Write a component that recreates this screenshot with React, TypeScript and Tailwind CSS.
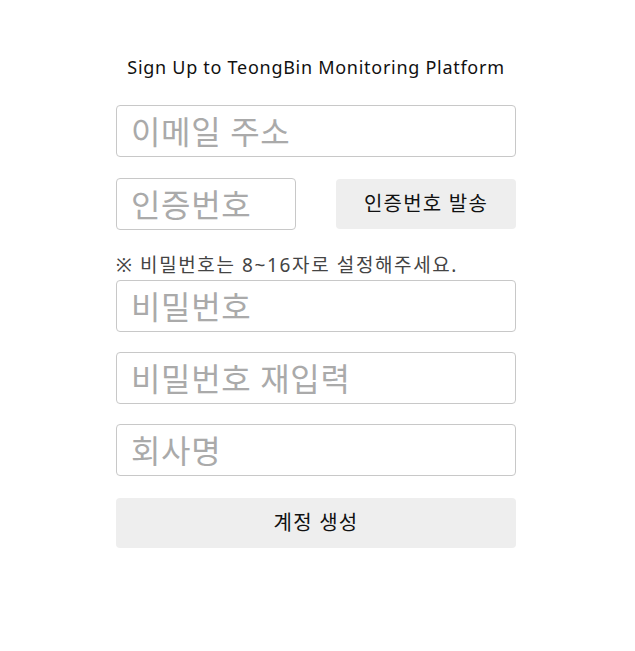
import React from 'react';

const font = { fontFamily: '"Noto Sans", "Noto Sans CJK KR", sans-serif' };

const inputClass =
  'h-[52px] rounded-[4px] border border-[#c8c8c8] bg-white px-[14px] text-[32px] tracking-[0.02em] text-[#333] placeholder:text-[#aaa] outline-none';

const App: React.FC = () => {
  return (
    <div className="min-h-[651px] w-full bg-white" style={font}>
      <div className="ml-[116px] flex w-[400px] flex-col pt-[53px]">
        <h1 className="text-center text-[18px] leading-[28px] tracking-[0.04em] text-[#111]">
          Sign Up to TeongBin Monitoring Platform
        </h1>

        <input className={`${inputClass} mt-[24px] w-full`} placeholder="이메일 주소" />

        <div className="mt-[21px] flex items-center justify-between">
          <input className={`${inputClass} w-[180px]`} placeholder="인증번호" />
          <button className="h-[50px] w-[180px] rounded-[4px] bg-[#eeeeee] text-[20px] tracking-[0.06em] text-[#111]">
            인증번호 발송
          </button>
        </div>

        <p className="mt-[22px] text-[19px] leading-[26px] tracking-[0.085em] text-[#444]">
          ※ 비밀번호는 8~16자로 설정해주세요.
        </p>

        <input type="password" className={`${inputClass} mt-[2px] w-full`} placeholder="비밀번호" />
        <input type="password" className={`${inputClass} mt-[20px] w-full`} placeholder="비밀번호 재입력" />
        <input className={`${inputClass} mt-[20px] w-full`} placeholder="회사명" />

        <button className="mt-[22px] h-[50px] w-full rounded-[4px] bg-[#eeeeee] text-[20px] tracking-[0.06em] text-[#111]">
          계정 생성
        </button>
      </div>
    </div>
  );
};

export default App;
